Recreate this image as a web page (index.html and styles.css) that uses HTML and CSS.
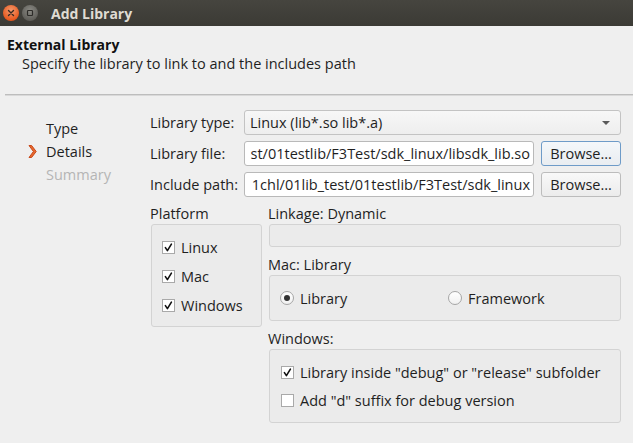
FILE: index.html
```html
<!DOCTYPE html>
<html>
<head>
<meta charset="utf-8">
<link rel="stylesheet" href="styles.css">
</head>
<body>
<div class="window">
  <div class="titlebar">
    <span class="tb-btn tb-close"><svg width="16" height="16" viewBox="0 0 16 16"><path d="M5.5 5.5 L10.5 10.5 M10.5 5.5 L5.5 10.5" stroke="#3a2a22" stroke-width="1.4" stroke-linecap="round"/></svg></span>
    <span class="tb-btn tb-max"><svg width="16" height="16" viewBox="0 0 16 16"><rect x="5.5" y="5.5" width="5" height="5" rx="0.8" fill="none" stroke="#2d2c29" stroke-width="1.2"/></svg></span>
    <span class="tb-title">Add Library</span>
  </div>

  <div class="header">
    <div class="header-title">External Library</div>
    <div class="header-sub">Specify the library to link to and the includes path</div>
  </div>
  <div class="divider"></div>

  <div class="main">
    <div class="nav">
      <div class="nav-item">Type</div>
      <div class="nav-item nav-current">
        <svg class="nav-arrow" width="9" height="15" viewBox="0 0 9 15"><path d="M1 1.5 L3.6 1.5 L8.2 7.5 L3.6 13.5 L1 13.5 L5.4 7.5 Z" fill="#e7692e" stroke="#c8481a" stroke-width="1" stroke-linejoin="round"/></svg>
        Details
      </div>
      <div class="nav-item nav-disabled">Summary</div>
    </div>

    <div class="form">
      <div class="grid">
        <div class="lbl">Library type:</div>
        <div class="combo"><span>Linux (lib*.so lib*.a)</span><span class="combo-arrow"></span></div>

        <div class="lbl">Library file:</div>
        <div class="input"><span>st/01testlib/F3Test/sdk_linux/libsdk_lib.so</span></div>
        <div class="btn btn-focus">Browse...</div>

        <div class="lbl">Include path:</div>
        <div class="input"><span>1chl/01lib_test/01testlib/F3Test/sdk_linux</span></div>
        <div class="btn">Browse...</div>
      </div>

      <div class="lower">
        <div class="col-left">
          <div class="glabel">Platform</div>
          <div class="group group-platform">
            <div class="check-row"><span class="cb on"></span>Linux</div>
            <div class="check-row"><span class="cb on"></span>Mac</div>
            <div class="check-row"><span class="cb on"></span>Windows</div>
          </div>
        </div>
        <div class="col-right">
          <div class="glabel">Linkage: Dynamic</div>
          <div class="group group-linkage"></div>

          <div class="glabel gap">Mac: Library</div>
          <div class="group group-mac">
            <div class="radio-row"><span class="rb on"></span>Library</div>
            <div class="radio-row"><span class="rb"></span>Framework</div>
          </div>

          <div class="glabel gap">Windows:</div>
          <div class="group group-win">
            <div class="check-row"><span class="cb on"></span>Library inside "debug" or "release" subfolder</div>
            <div class="check-row"><span class="cb"></span>Add "d" suffix for debug version</div>
          </div>
        </div>
      </div>
    </div>
  </div>
</div>
</body>
</html>
```

FILE: styles.css
```css
html, body {
  margin: 0;
  padding: 0;
}
body {
  background: #efefef;
  font-family: "Open Sans", "DejaVu Sans", sans-serif;
  font-size: 14.5px;
  color: #1f1f1f;
  width: 633px;
  height: 443px;
  overflow: hidden;
}
.window {
  width: 633px;
  height: 443px;
}
.titlebar {
  height: 26px;
  background: linear-gradient(#46453f, #3b3a35);
  display: flex;
  align-items: center;
  padding-left: 3px;
  gap: 3px;
}
.tb-btn {
  width: 16px;
  height: 16px;
  border-radius: 50%;
  display: flex;
}
.tb-close {
  background: radial-gradient(circle at 50% 35%, #f39a6e, #e8591f 70%, #c9471a);
}
.tb-max {
  background: radial-gradient(circle at 50% 35%, #8a8983, #5e5d58 75%, #4b4a46);
}
.tb-title {
  margin-left: 10px;
  color: #dfdbd2;
  font-weight: bold;
  font-size: 14px;
}
.header {
  padding: 9px 0 0 7px;
  height: 56px;
  box-sizing: border-box;
}
.header-title {
  font-weight: bold;
  color: #111;
  line-height: 19px;
  font-size: 14px;
}
.header-sub {
  padding-left: 15px;
  line-height: 19px;
}
.divider {
  margin: 12px 0 0 5px;
  border-top: 1px solid #bdbdbd;
  border-bottom: 1px solid #d9d9d9;
}
.main {
  display: flex;
}
.nav {
  width: 122px;
  padding: 21px 0 0 28px;
  box-sizing: content-box;
}
.nav-item {
  line-height: 23px;
  padding-left: 18px;
  position: relative;
}
.nav-arrow {
  position: absolute;
  left: 0;
  top: 4px;
}
.nav-disabled {
  color: #b5b5b5;
}
.form {
  width: 471px;
  padding-top: 14px;
}
.grid {
  display: grid;
  grid-template-columns: 94px 290px 87px;
  grid-auto-rows: 25px;
  row-gap: 6px;
  align-items: center;
}
.lbl {
  white-space: nowrap;
}
.combo {
  grid-column: 2 / 4;
  height: 25px;
  box-sizing: border-box;
  border: 1px solid #c3c3c3;
  border-radius: 3px;
  background: linear-gradient(#f7f7f7, #eeeeee);
  display: flex;
  align-items: center;
  justify-content: space-between;
  padding: 0 10px 0 5px;
}
.combo-arrow {
  width: 0;
  height: 0;
  border-left: 4px solid transparent;
  border-right: 4px solid transparent;
  border-top: 4px solid #5a5a5a;
}
.input {
  height: 25px;
  box-sizing: border-box;
  border: 1px solid #b9b9b9;
  border-radius: 3px;
  background: #fff;
  display: flex;
  align-items: center;
  justify-content: flex-end;
  overflow: hidden;
  white-space: nowrap;
  padding-right: 3px;
}
.btn {
  justify-self: end;
  width: 80px;
  height: 25px;
  box-sizing: border-box;
  border: 1px solid #bcbcbc;
  border-radius: 3px;
  background: linear-gradient(#f8f8f8, #ececec);
  display: flex;
  align-items: center;
  justify-content: center;
}
.btn-focus {
  border-color: #6e9bc8;
  background: linear-gradient(#f4f7fa, #e9edf1);
}
.lower {
  display: flex;
  margin-top: 7px;
  gap: 6px;
}
.col-left {
  width: 112px;
}
.col-right {
  width: 353px;
}
.glabel {
  height: 20px;
  line-height: 20px;
  white-space: nowrap;
}
.glabel.gap {
  margin-top: 8px;
}
.group {
  margin-left: 1px;
  border: 1px solid #d3d3d3;
  border-radius: 3px;
  background: #ebebeb;
  box-sizing: border-box;
}
.group-platform {
  height: 103px;
  padding: 12px 0 0 10px;
  display: flex;
  flex-direction: column;
  gap: 9px;
}
.group-linkage {
  height: 23px;
}
.group-mac {
  height: 46px;
  display: grid;
  grid-template-columns: 168px 1fr;
  align-items: center;
  padding-left: 10px;
}
.group-win {
  height: 74px;
  padding: 12px 0 0 11px;
  display: flex;
  flex-direction: column;
  gap: 8px;
}
.check-row, .radio-row {
  height: 20px;
  display: flex;
  align-items: center;
  white-space: nowrap;
}
.cb {
  width: 13px;
  height: 13px;
  box-sizing: border-box;
  border: 1px solid #a9a9a9;
  background: #fff;
  margin-right: 6px;
  flex: none;
}
.cb.on {
  background: #fff url("data:image/svg+xml;utf8,<svg xmlns='http://www.w3.org/2000/svg' width='11' height='11' viewBox='0 0 11 11'><path d='M2.4 5.6 L4.4 8.6 L8.4 2.2' fill='none' stroke='%23111' stroke-width='1.6' stroke-linecap='round' stroke-linejoin='round'/></svg>") center / 11px 11px no-repeat;
}
.rb {
  width: 14px;
  height: 14px;
  box-sizing: border-box;
  border: 1px solid #a6a6a6;
  border-radius: 50%;
  background: linear-gradient(#ffffff, #f1f1f1);
  margin-right: 6px;
  flex: none;
  display: flex;
  align-items: center;
  justify-content: center;
}
.rb.on::after {
  content: "";
  width: 6px;
  height: 6px;
  border-radius: 50%;
  background: #333;
}
```
